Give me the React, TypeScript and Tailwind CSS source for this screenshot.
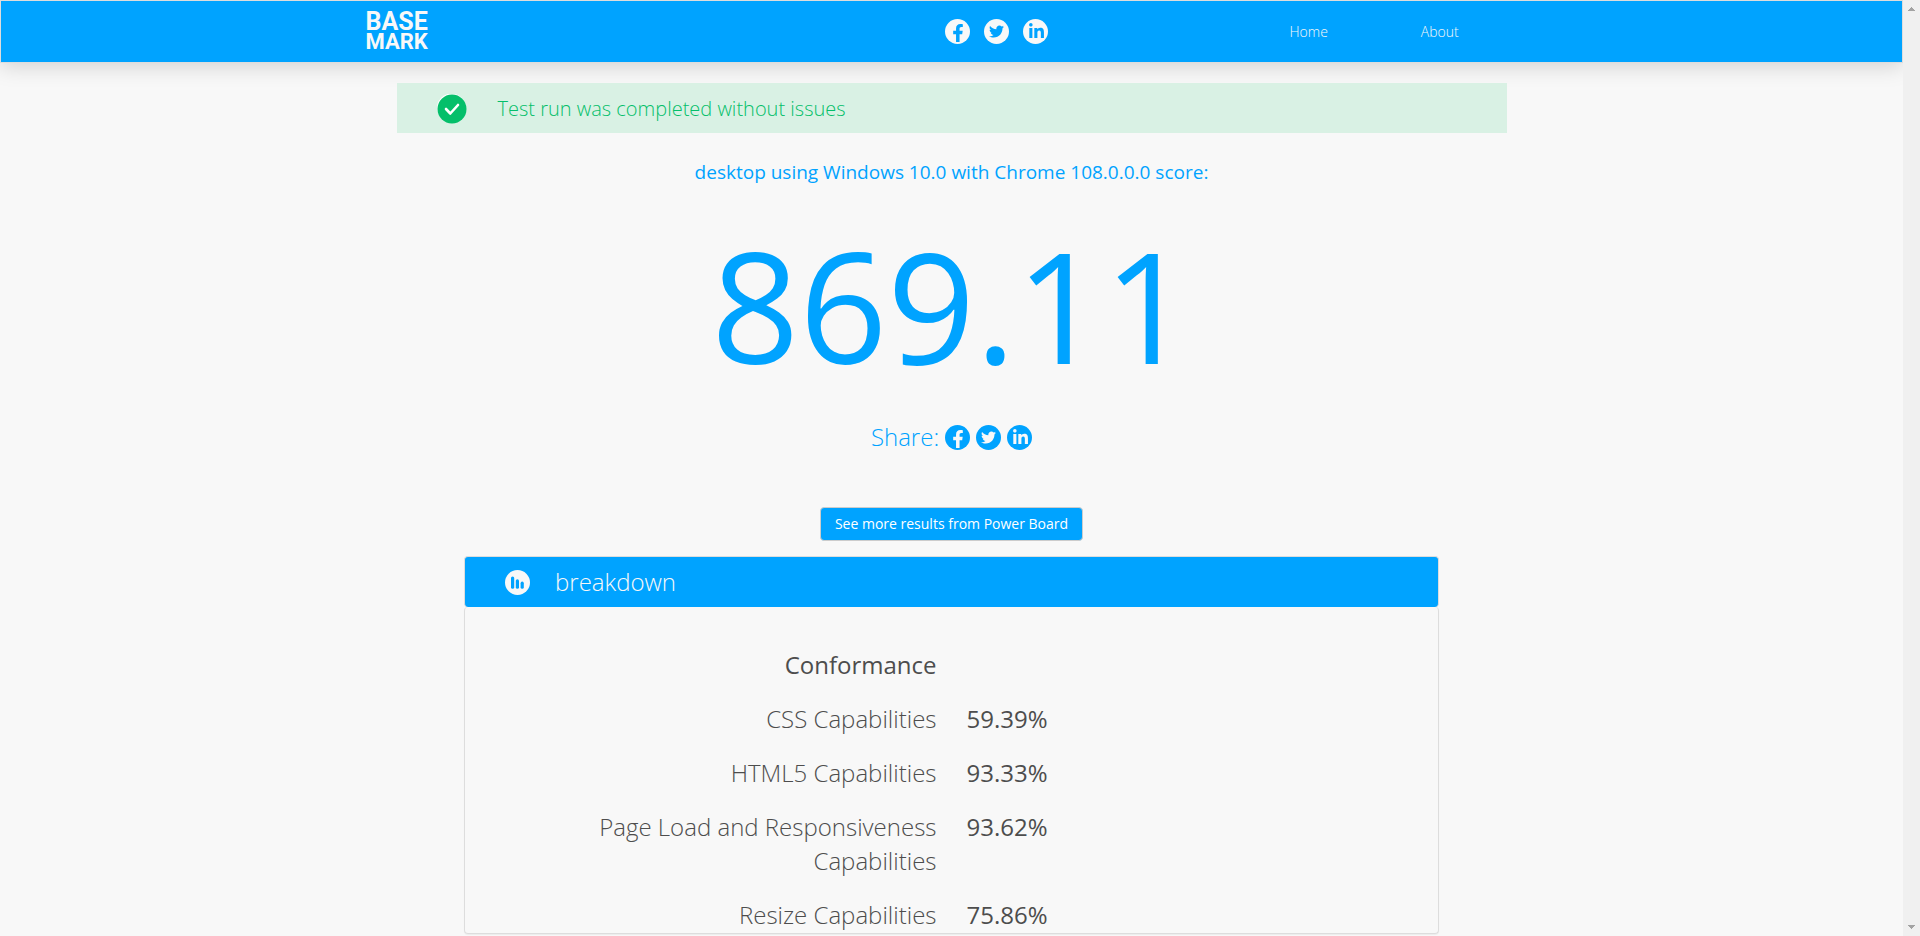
import type { ReactNode } from "react";
import { FaFacebookF, FaLinkedinIn, FaTwitter } from "react-icons/fa";

const results = [
  { name: "CSS Capabilities", value: "59.39%" },
  { name: "HTML5 Capabilities", value: "93.33%" },
  { name: "Page Load and Responsiveness Capabilities", value: "93.62%" },
  { name: "Resize Capabilities", value: "75.86%" },
];

function RoundLink({ label, children }: { label: string; children: ReactNode }) {
  return (
    <a href="#" aria-label={label}>
      <svg width="25" height="25" viewBox="0 0 25 25">
        <circle cx="12.5" cy="12.5" r="12.5" fill="currentColor" />
        {children}
      </svg>
    </a>
  );
}

function SocialLinks({ glyph }: { glyph: string }) {
  return (
    <>
      <RoundLink label="Facebook">
        <FaFacebookF x={4} y={5} size={18} color={glyph} />
      </RoundLink>
      <RoundLink label="Twitter">
        <FaTwitter x={5} y={5} size={15} color={glyph} />
      </RoundLink>
      <RoundLink label="LinkedIn">
        <FaLinkedinIn x={5} y={4} size={17} color={glyph} />
      </RoundLink>
    </>
  );
}

function Header() {
  return (
    <header className="flex h-[63px] shrink-0 justify-center border border-[#ddd] bg-[#00a3ff] shadow-[0_4px_20px_rgba(0,0,0,0.15)]">
      <div className="flex w-full max-w-[1172px] items-center">
        <a href="#" className="flex w-[579px] flex-col font-[Roboto,sans-serif] font-bold text-[#f8f8f8]">
          <span className="text-[25px] leading-5">BASE</span>
          <span className="text-[22px] leading-5">MARK</span>
        </a>
        <div className="flex w-[345px] gap-[14px] text-[#f8f8f8]">
          <SocialLinks glyph="#00a3ff" />
        </div>
        <nav className="flex gap-[93px] text-sm font-light text-[#f8f8f8]">
          <a href="#">Home</a>
          <a href="#">About</a>
        </nav>
      </div>
    </header>
  );
}

function Breakdown() {
  return (
    <section className="mt-[15px] w-full max-w-[975px] text-2xl leading-[34px]">
      <div className="flex h-[51px] items-center gap-[25px] rounded border border-b-0 border-[#ddd] bg-[#00a3ff] px-10 text-[#f8f8f8]">
        <svg width="25" height="25" viewBox="0 0 25 25">
          <circle cx="12.5" cy="12.5" r="12.5" fill="#f8f8f8" />
          <g stroke="#00a3ff" strokeWidth="3.2" strokeLinecap="round">
            <path d="M7.6 8V17.2" />
            <path d="M12.4 10.8V17.2" />
            <path d="M17.2 13.2V17.2" />
          </g>
        </svg>
        <h2 className="font-light">breakdown</h2>
      </div>
      <div className="rounded border border-t-0 border-[#ddd] pt-[41px] shadow-[0_1px_1px_rgba(0,0,0,0.05)]">
        <table className="w-full table-fixed text-[#4d4d4d]">
          <tbody>
            <tr>
              <th className="px-[15px] pb-5 text-right font-normal">Conformance</th>
              <td />
            </tr>
            {results.map((r) => (
              <tr key={r.name} className="group align-top">
                <th className="px-[15px] pb-5 text-right font-light group-last:pb-px">{r.name}</th>
                <td className="px-[15px] pb-5 group-last:pb-px">{r.value}</td>
              </tr>
            ))}
          </tbody>
        </table>
      </div>
    </section>
  );
}

function ScrollTrack() {
  return (
    <div className="z-10 flex w-[17px] shrink-0 flex-col items-center justify-between bg-[#f0f0f0] py-[7px]" aria-hidden="true">
      <svg width="7" height="4" fill="#a3a3a3" shapeRendering="crispEdges">
        <path d="M0 4L3.5 0L7 4Z" />
      </svg>
      <svg width="7" height="4" fill="#a3a3a3" shapeRendering="crispEdges">
        <path d="M0 0L3.5 4L7 0Z" />
      </svg>
    </div>
  );
}

export default function App() {
  return (
    <div className="flex h-screen overflow-hidden bg-[#f8f8f8] font-['Open_Sans',sans-serif]">
      <div className="flex min-w-0 flex-1 flex-col">
        <Header />
        <main className="flex flex-col items-center text-[#00a3ff]">
          <div role="status" className="mt-5 flex h-[50px] w-full max-w-[1110px] items-center gap-[30px] bg-[#d9f1e4] px-10 pt-0.5 text-[#04bf6a]">
            <svg width="31" height="31" viewBox="0 0 31 31">
              <circle cx="14.4" cy="14" r="14.5" fill="#fff" />
              <circle cx="15" cy="15" r="14.5" fill="currentColor" />
              <path d="M9 15L13.3 19.5L21 11" fill="none" stroke="#fff" strokeWidth="2.6" strokeLinecap="round" strokeLinejoin="round" />
            </svg>
            <p className="text-xl font-light">Test run was completed without issues</p>
          </div>
          <h1 className="mt-[25px] text-[19px] leading-7">desktop using Windows 10.0 with Chrome 108.0.0.0 score:</h1>
          <p className="mt-[26px] text-[154px] leading-[184px]">869.11</p>
          <div className="mt-6 flex items-center gap-[6px] text-2xl leading-[34px]">
            <span className="font-light">Share:</span>
            <SocialLinks glyph="#f8f8f8" />
          </div>
          <button className="mt-[53px] h-[34px] rounded border border-[#ccc] bg-[#00a3ff] px-3.5 text-sm text-white">
            See more results from Power Board
          </button>
          <Breakdown />
        </main>
      </div>
      <ScrollTrack />
    </div>
  );
}
